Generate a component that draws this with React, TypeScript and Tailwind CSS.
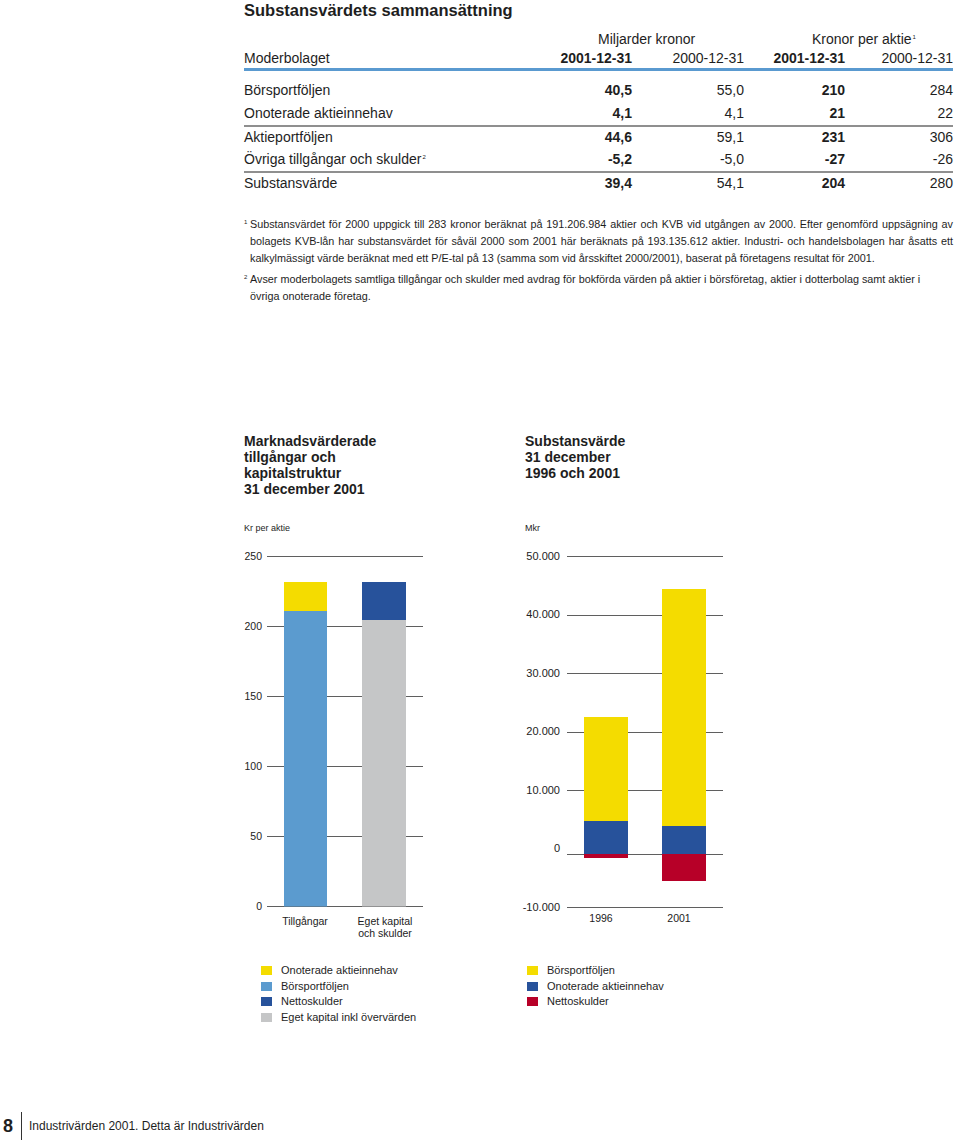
import React from "react";

const rows = [
  { label: "Börsportföljen", v: ["40,5", "55,0", "210", "284"] },
  { label: "Onoterade aktieinnehav", v: ["4,1", "4,1", "21", "22"] },
  { label: "Aktieportföljen", v: ["44,6", "59,1", "231", "306"], line: true },
  { label: "Övriga tillgångar och skulder", sup: "2", v: ["-5,2", "-5,0", "-27", "-26"] },
  { label: "Substansvärde", v: ["39,4", "54,1", "204", "280"], line: true },
];

const YELLOW = "#f4dc00";
const LIGHTBLUE = "#5b9bcf";
const DARKBLUE = "#27529b";
const GRAY = "#c5c6c7";
const RED = "#b70028";
const GRID = "#5f5f5f";

const leftTicks = [250, 200, 150, 100, 50, 0];

const rightTicks = [
  { label: "50.000", ty: 556, ly: 556 },
  { label: "40.000", ty: 614, ly: 615 },
  { label: "30.000", ty: 673, ly: 673 },
  { label: "20.000", ty: 731, ly: 732 },
  { label: "10.000", ty: 790, ly: 790 },
  { label: "0", ty: 848, ly: 854 },
  { label: "-10.000", ty: 907, ly: 907 },
];

const AssetsChart = () => (
  <svg width="216" height="400" viewBox="244 545 216 400" fill="#222">
    {leftTicks.map((t) => {
      const y = 906 - 1.4 * t;
      return (
        <g key={t}>
          <text x={262} y={y + 3.5} textAnchor="end" fontSize={10.5}>
            {t}
          </text>
          <line x1={267} x2={423} y1={y + 0.5} y2={y + 0.5} stroke={GRID} strokeWidth={1} />
        </g>
      );
    })}
    <rect x={284} y={582} width={43} height={29} fill={YELLOW} />
    <rect x={284} y={611} width={43} height={295.5} fill={LIGHTBLUE} />
    <rect x={362} y={582} width={44} height={38} fill={DARKBLUE} />
    <rect x={362} y={620} width={44} height={286.5} fill={GRAY} />
    <text x={305} y={925} textAnchor="middle" fontSize={10.5}>
      Tillgångar
    </text>
    <text x={385} y={925} textAnchor="middle" fontSize={10.5}>
      Eget kapital
    </text>
    <text x={385} y={937} textAnchor="middle" fontSize={10.5}>
      och skulder
    </text>
  </svg>
);

const NavChart = () => (
  <svg width="230" height="400" viewBox="515 545 230 400" fill="#222">
    {rightTicks.map((t) => (
      <g key={t.label}>
        <text x={560} y={t.ty + 4} textAnchor="end" fontSize={11}>
          {t.label}
        </text>
        <line x1={567} x2={723} y1={t.ly + 0.5} y2={t.ly + 0.5} stroke={GRID} strokeWidth={1} />
      </g>
    ))}
    {/* 1996 */}
    <rect x={584} y={717} width={44} height={104} fill={YELLOW} />
    <rect x={584} y={821} width={44} height={33} fill={DARKBLUE} />
    <rect x={584} y={854} width={44} height={4} fill={RED} />
    {/* 2001 */}
    <rect x={662} y={589} width={44} height={237} fill={YELLOW} />
    <rect x={662} y={826} width={44} height={28} fill={DARKBLUE} />
    <rect x={662} y={854} width={44} height={27} fill={RED} />
    <text x={601} y={922} textAnchor="middle" fontSize={10.5}>
      1996
    </text>
    <text x={679} y={922} textAnchor="middle" fontSize={10.5}>
      2001
    </text>
  </svg>
);

const LegendRow = ({ color, label }: { color: string; label: string }) => (
  <div className="flex items-center h-[15.5px]">
    <span className="w-[11px] h-[9px] shrink-0" style={{ backgroundColor: color }} />
    <span className="ml-[9px] text-[11px] leading-[15px]">{label}</span>
  </div>
);

export default function App() {
  return (
    <div className="w-[960px] h-[1144px] flex flex-col bg-white text-[#1e1e1e] font-['Liberation_Sans',Arial,sans-serif]">
      <div className="pl-[244px] pr-[7px]">
        <h1 className="text-[16.5px] font-bold leading-[20px]">Substansvärdets sammansättning</h1>

        {/* Table header */}
        <div className="mt-[10px] grid grid-cols-[288px_100px_112px_101px_108px] text-[14px] leading-[19px]">
          <div className="col-start-2 col-span-2 pl-[66px]">Miljarder kronor</div>
          <div className="col-span-2 pl-[68px]">
            Kronor per aktie<sup className="text-[6px] align-baseline relative -top-[5px] ml-[1px]">1</sup>
          </div>
        </div>
        <div className="grid grid-cols-[288px_100px_112px_101px_108px] text-[14px] leading-[19px]">
          <div>Moderbolaget</div>
          <div className="text-right font-bold">2001-12-31</div>
          <div className="text-right">2000-12-31</div>
          <div className="text-right font-bold">2001-12-31</div>
          <div className="text-right">2000-12-31</div>
        </div>
        <div className="h-[3px] bg-[#5a9ad0]" />

        {/* Table rows */}
        <div className="mt-[8px]">
          {rows.map((r) => (
            <div
              key={r.label}
              className={`grid grid-cols-[288px_100px_112px_101px_108px] h-[23px] items-center text-[14px] leading-[19px] ${
                r.line ? "border-t-2 border-[#8f8f8f]" : ""
              }`}
            >
              <div>
                {r.label}
                {r.sup && (
                  <sup className="text-[6px] align-baseline relative -top-[5px] ml-[1px]">{r.sup}</sup>
                )}
              </div>
              <div className="text-right font-bold">{r.v[0]}</div>
              <div className="text-right">{r.v[1]}</div>
              <div className="text-right font-bold">{r.v[2]}</div>
              <div className="text-right">{r.v[3]}</div>
            </div>
          ))}
        </div>

        {/* Footnotes */}
        <div className="mt-[22px] flex text-[10.8px] leading-[17px]">
          <span className="w-[6px] shrink-0 text-[6px] leading-[12px]">1</span>
          <div className="flex-1">
            <div className="whitespace-nowrap text-justify [text-align-last:justify]">
              Substansvärdet för 2000 uppgick till 283 kronor beräknat på 191.206.984 aktier och KVB vid utgången av 2000. Efter genomförd uppsägning av
            </div>
            <div className="whitespace-nowrap text-justify [text-align-last:justify]">
              bolagets KVB-lån har substansvärdet för såväl 2000 som 2001 här beräknats på 193.135.612 aktier. Industri- och handelsbolagen har åsatts ett
            </div>
            <div className="whitespace-nowrap">
              kalkylmässigt värde beräknat med ett P/E-tal på 13 (samma som vid årsskiftet 2000/2001), baserat på företagens resultat för 2001.
            </div>
          </div>
        </div>
        <div className="mt-[4px] flex text-[10.8px] leading-[17px]">
          <span className="w-[6px] shrink-0 text-[6px] leading-[12px]">2</span>
          <div className="flex-1">
            <div className="whitespace-nowrap">
              Avser moderbolagets samtliga tillgångar och skulder med avdrag för bokförda värden på aktier i börsföretag, aktier i dotterbolag samt aktier i
            </div>
            <div>övriga onoterade företag.</div>
          </div>
        </div>

        {/* Charts */}
        <div className="mt-[128px] grid grid-cols-[281px_1fr]">
          <div className="flex flex-col">
            <div className="h-[89px] text-[14px] font-bold leading-[16px]">
              Marknadsvärderade
              <br />
              tillgångar och
              <br />
              kapitalstruktur
              <br />
              31 december 2001
            </div>
            <div className="h-[12px] text-[9px] leading-[12px]">Kr per aktie</div>
            <div className="mt-[11px]">
              <AssetsChart />
            </div>
            <div className="mt-[18px] pl-[17px]">
              <LegendRow color={YELLOW} label="Onoterade aktieinnehav" />
              <LegendRow color={LIGHTBLUE} label="Börsportföljen" />
              <LegendRow color={DARKBLUE} label="Nettoskulder" />
              <LegendRow color={GRAY} label="Eget kapital inkl övervärden" />
            </div>
          </div>
          <div className="flex flex-col">
            <div className="h-[89px] text-[14px] font-bold leading-[16px]">
              Substansvärde
              <br />
              31 december
              <br />
              1996 och 2001
            </div>
            <div className="h-[12px] text-[9px] leading-[12px]">Mkr</div>
            <div className="mt-[11px] -ml-[10px]">
              <NavChart />
            </div>
            <div className="mt-[18px] pl-[2px]">
              <LegendRow color={YELLOW} label="Börsportföljen" />
              <LegendRow color={DARKBLUE} label="Onoterade aktieinnehav" />
              <LegendRow color={RED} label="Nettoskulder" />
            </div>
          </div>
        </div>
      </div>

      {/* Footer */}
      <div className="mt-auto mb-[4px] h-[28px] flex items-center">
        <span className="ml-[3px] text-[18px] font-bold leading-none">8</span>
        <span className="ml-[8px] w-px h-[28px] bg-[#333]" />
        <span className="ml-[7px] text-[12px]">Industrivärden 2001. Detta är Industrivärden</span>
      </div>
    </div>
  );
}
